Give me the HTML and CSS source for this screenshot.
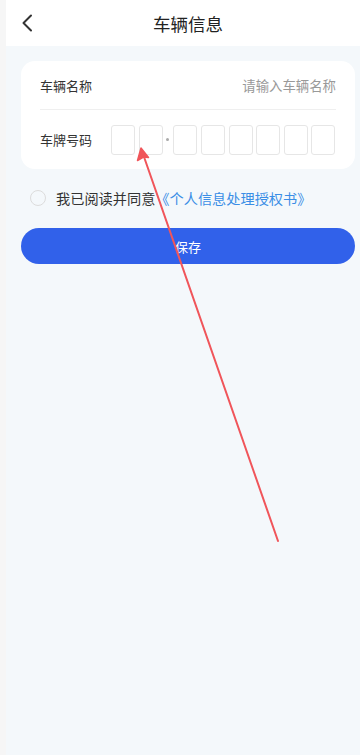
FILE: index.html
```html
<!DOCTYPE html>
<html lang="zh">
<head>
  <meta charset="UTF-8" />
  <meta name="viewport" content="width=device-width, initial-scale=1.0" />
  <title>车辆信息</title>
  <link rel="stylesheet" href="styles.css">
</head>
<body>
  <div class="app">
    <header class="topbar">
      <span class="back">
        <svg width="12" height="18" viewBox="0 0 12 18"><path d="M10 1.5 L2.5 9 L10 16.5" fill="none" stroke="#333" stroke-width="2" stroke-linecap="round" stroke-linejoin="round"/></svg>
      </span>
      <h1>车辆信息</h1>
    </header>

    <div class="content">
      <div class="card">
        <div class="row">
          <span class="label">车辆名称</span>
          <input class="name-input" type="text" placeholder="请输入车辆名称" />
        </div>
        <div class="row plate-row">
          <span class="label">车牌号码</span>
          <div class="plate">
            <span class="box"></span>
            <span class="box"></span>
            <span class="dot"></span>
            <span class="box"></span>
            <span class="box"></span>
            <span class="box"></span>
            <span class="box"></span>
            <span class="box"></span>
            <span class="box"></span>
          </div>
        </div>
      </div>

      <div class="agree">
        <span class="radio"></span>
        <span>我已阅读并同意</span><a class="link">《个人信息处理授权书》</a>
      </div>

      <button class="save">保存</button>
    </div>

    <svg class="arrow" width="360" height="755" viewBox="0 0 360 755">
      <line x1="278" y1="541" x2="143" y2="154" stroke="#f0555a" stroke-width="2" stroke-linecap="round"/>
      <path d="M141 148 L137.5 160.5 L143.5 157 L148.5 157.5 Z" fill="#f0555a" stroke="#f0555a" stroke-width="1.5" stroke-linejoin="round"/>
    </svg>
  </div>
</body>
</html>
```

FILE: styles.css
```css
body {
  margin: 0;
  background-color: #f6f6f6;
  font-family: "Noto Sans CJK SC", "Noto Sans", sans-serif;
  color: #333;
}
.app {
  position: relative;
  margin-left: 6px;
  min-height: 755px;
  background-color: #f4f8fb;
  overflow: hidden;
}
.topbar {
  position: relative;
  height: 46px;
  background: #fff;
  display: flex;
  align-items: center;
  justify-content: center;
}
.topbar h1 {
  margin: 0 0 0 10px;
  font-size: 17.5px;
  font-weight: 400;
  color: #222;
}
.back {
  position: absolute;
  left: 15px;
  top: 14px;
  display: flex;
}
.content {
  padding: 15px 5px 0 15px;
}
.card {
  background: #fff;
  border-radius: 14px;
  padding: 0 19px;
}
.row {
  display: flex;
  align-items: center;
  justify-content: space-between;
  height: 48px;
  border-bottom: 1px solid #efefef;
}
.plate-row {
  height: 59px;
  border-bottom: none;
  justify-content: flex-start;
}
.label {
  font-size: 13px;
  color: #333;
  width: 71px;
  flex-shrink: 0;
}
.name-input {
  border: none;
  outline: none;
  text-align: right;
  font-family: inherit;
  font-size: 13.4px;
  width: 160px;
  padding: 0;
  color: #333;
}
.name-input::placeholder {
  color: #999;
}
.plate {
  display: flex;
  align-items: center;
  gap: 3.6px;
}
.box {
  box-sizing: border-box;
  width: 24px;
  height: 30px;
  border: 1px solid #e6e6e6;
  border-radius: 3px;
}
.dot {
  width: 3px;
  height: 3px;
  border-radius: 50%;
  background: #aaa;
  margin: 0 0.3px;
}
.agree {
  display: flex;
  align-items: center;
  margin: 20px 0 0 9px;
  font-size: 14.2px;
  color: #333;
  height: 18px;
}
.radio {
  box-sizing: border-box;
  width: 16px;
  height: 16px;
  border: 1.5px solid #dcdcdc;
  border-radius: 50%;
  margin-right: 10px;
}
.link {
  color: #3a8ee6;
}
.save {
  display: block;
  width: 100%;
  height: 36px;
  margin-top: 21px;
  border: none;
  border-radius: 18px;
  background-color: #3161ea;
  color: #fff;
  font-family: inherit;
  font-size: 13px;
}
.arrow {
  position: absolute;
  left: -6px;
  top: 0;
  pointer-events: none;
}
```
